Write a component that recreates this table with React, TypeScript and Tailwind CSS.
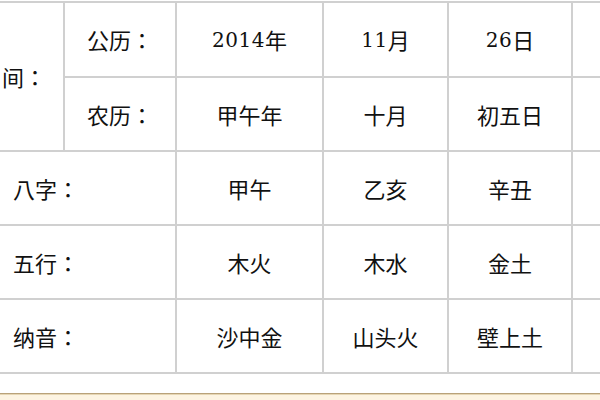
import React from "react";

const cjk = '"Noto Sans CJK JP", "Noto Sans CJK SC", sans-serif';
const num = '"DejaVu Serif", "Noto Sans CJK JP", serif';

function Label({ text, span2 }: { text: string; span2?: boolean }) {
  return (
    <div
      className={
        "bg-white flex items-center pl-[22px] text-[22px] text-[#111] " +
        (span2 ? "col-span-2" : "")
      }
    >
      {text}
    </div>
  );
}

function Val({ text, digits }: { text: string; digits?: string }) {
  return (
    <div className="bg-white flex items-center justify-center text-[22px] text-[#111]">
      {digits ? (
        <span className="text-[20px] tracking-[0.5px]" style={{ fontFamily: num }}>
          {digits}
        </span>
      ) : null}
      <span>{text}</span>
    </div>
  );
}

function Empty() {
  return <div className="bg-white" />;
}

export default function App() {
  return (
    <div
      className="w-[600px] h-[400px] overflow-hidden bg-white flex flex-col"
      style={{ fontFamily: cjk }}
    >
      <div className="pt-[1px]">
        <div className="ml-[-11px] w-max grid grid-cols-[72px_110px_145px_123px_122px_122px] grid-rows-[73px_72px_72px_72px_72px] gap-[2px] p-[2px] bg-[#d0d0d0]">
          <div className="bg-white row-span-2 flex items-center pl-[11px] text-[22px] text-[#111] whitespace-nowrap">
            <span>间：</span>
          </div>
          <Label text="公历：" />
          <Val digits="2014" text="年" />
          <Val digits="11" text="月" />
          <Val digits="26" text="日" />
          <Empty />

          <Label text="农历：" />
          <Val text="甲午年" />
          <Val text="十月" />
          <Val text="初五日" />
          <Empty />

          <Label text="八字：" span2 />
          <Val text="甲午" />
          <Val text="乙亥" />
          <Val text="辛丑" />
          <Empty />

          <Label text="五行：" span2 />
          <Val text="木火" />
          <Val text="木水" />
          <Val text="金土" />
          <Empty />

          <Label text="纳音：" span2 />
          <Val text="沙中金" />
          <Val text="山头火" />
          <Val text="壁上土" />
          <Empty />
        </div>
      </div>
      <div className="h-[19px] bg-white shrink-0" />
      <div className="h-[1px] bg-[#b9a27a] shrink-0" />
      <div className="h-[1px] bg-[#e6d6b4] shrink-0" />
      <div className="flex-1 bg-[#fdf4e2]" />
    </div>
  );
}
